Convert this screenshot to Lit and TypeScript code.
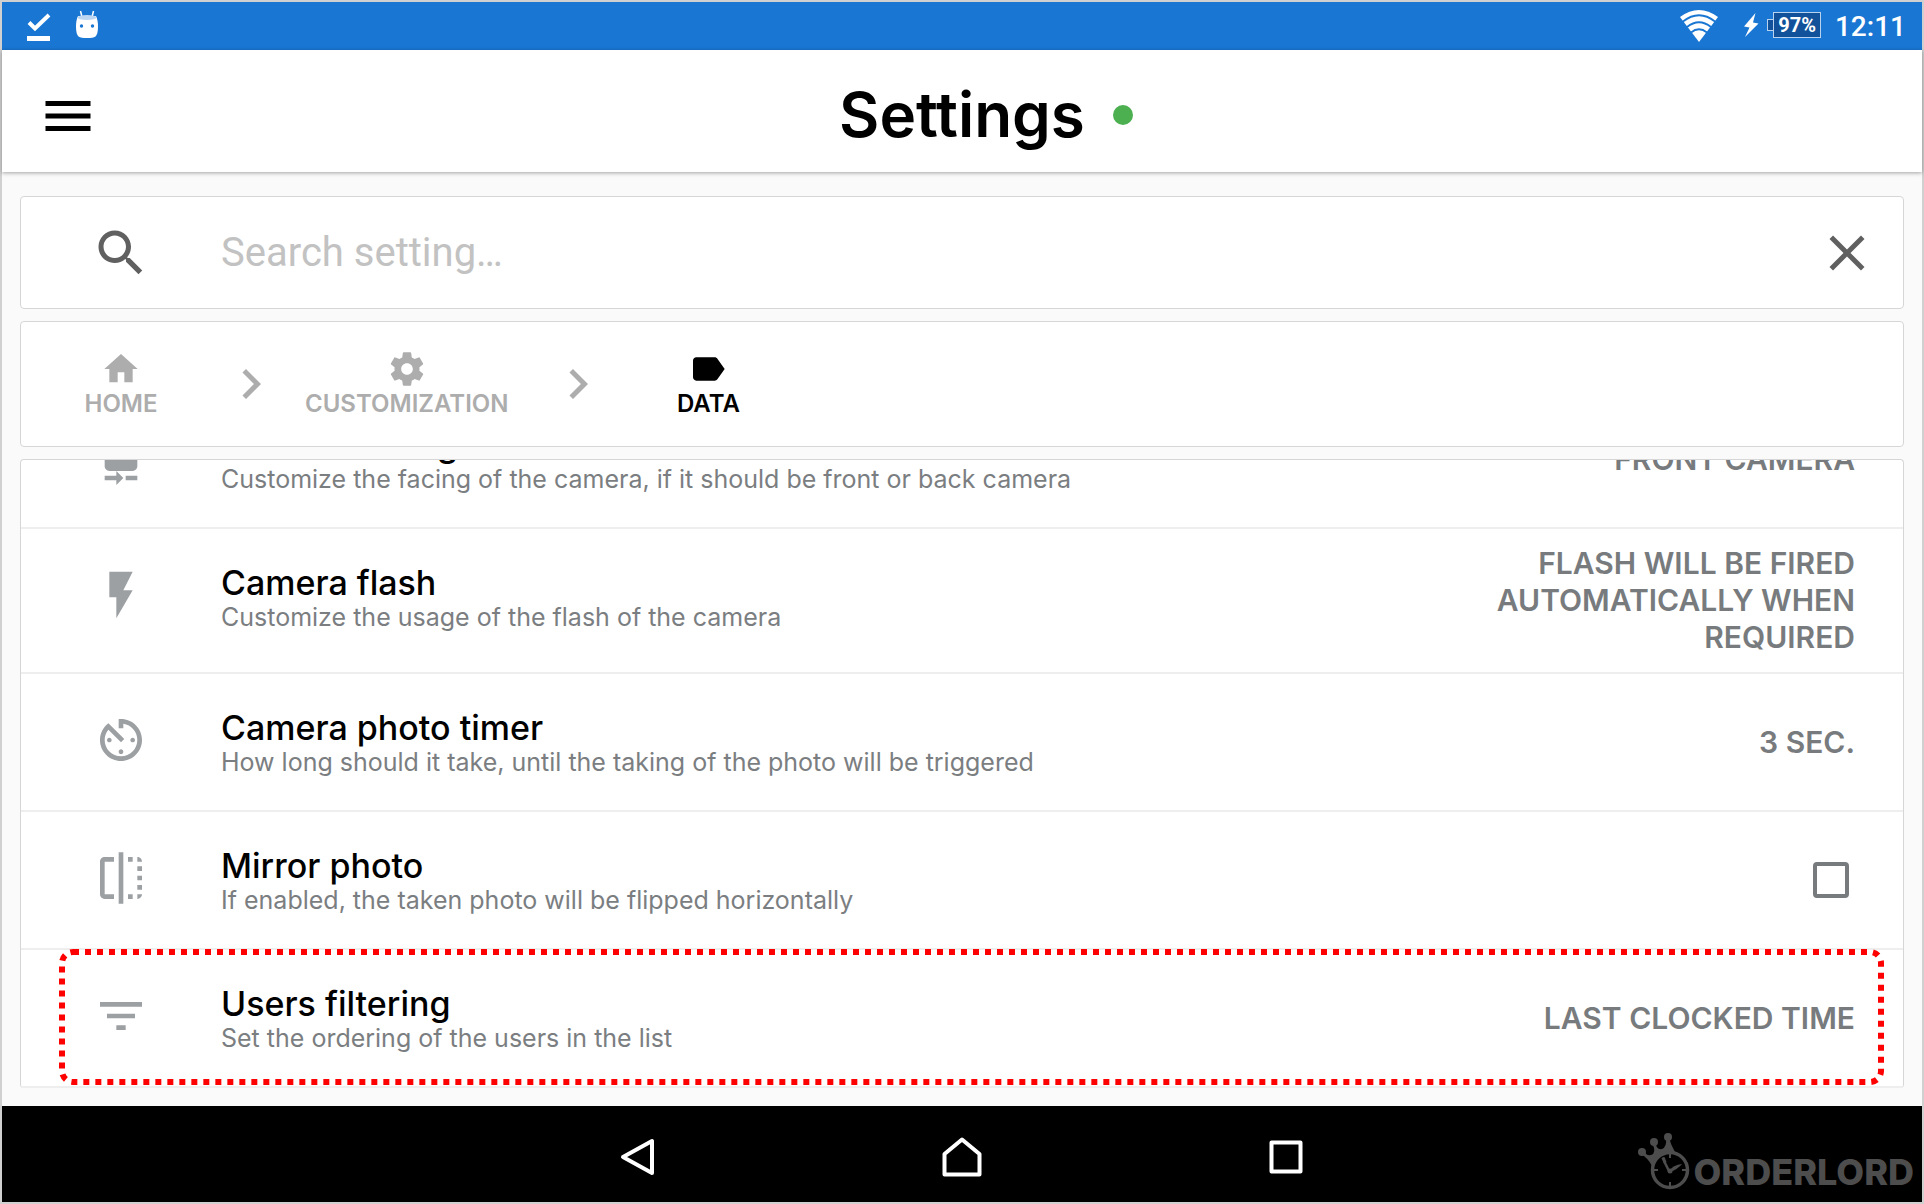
import { LitElement, html, css, svg, nothing } from "lit";
import { customElement, property, state } from "lit/decorators.js";
import { classMap } from "lit/directives/class-map.js";

const ICONS: Record<string, string> = {
  menu: "M3 18h18v-2H3v2zm0-5h18v-2H3v2zm0-7v2h18V6H3z",
  search:
    "M15.5 14h-.79l-.28-.27C15.41 12.59 16 11.11 16 9.5 16 5.91 13.09 3 9.5 3S3 5.91 3 9.5 5.91 16 9.5 16c1.61 0 3.09-.59 4.23-1.57l.27.28v.79l5 4.99L20.49 19l-4.99-5zm-6 0C7.01 14 5 11.99 5 9.5S7.01 5 9.5 5 14 7.01 14 9.5 11.99 14 9.5 14z",
  close:
    "M19 6.41L17.59 5 12 10.59 6.41 5 5 6.41 10.59 12 5 17.59 6.41 19 12 13.41 17.59 19 19 17.59 13.41 12z",
  home: "M10 20v-6h4v6h5v-8h3L12 3 2 12h3v8z",
  chevron: "M10 6L8.59 7.41 13.17 12l-4.58 4.59L10 18l6-6z",
  settings:
    "M19.43 12.98c.04-.32.07-.64.07-.98s-.03-.66-.07-.98l2.11-1.65c.19-.15.24-.42.12-.64l-2-3.46c-.12-.22-.39-.3-.61-.22l-2.49 1c-.52-.4-1.08-.73-1.69-.98l-.38-2.65C14.46 2.18 14.25 2 14 2h-4c-.25 0-.46.18-.49.42l-.38 2.65c-.61.25-1.17.59-1.69.98l-2.49-1c-.23-.09-.49 0-.61.22l-2 3.46c-.13.22-.07.49.12.64l2.11 1.65c-.04.32-.07.65-.07.98s.03.66.07.98l-2.11 1.65c-.19.15-.24.42-.12.64l2 3.46c.12.22.39.3.61.22l2.49-1c.52.4 1.08.73 1.69.98l.38 2.65c.03.24.24.42.49.42h4c.25 0 .46-.18.49-.42l.38-2.65c.61-.25 1.17-.59 1.69-.98l2.49 1c.23.09.49 0 .61-.22l2-3.46c.12-.22.07-.49-.12-.64l-2.11-1.65zM12 15.5c-1.93 0-3.5-1.57-3.5-3.5s1.57-3.5 3.5-3.5 3.5 1.57 3.5 3.5-1.57 3.5-3.5 3.5z",
  label:
    "M17.63 5.84C17.27 5.33 16.67 5 16 5L5 5.01C3.9 5.01 3 5.9 3 7v10c0 1.1.9 1.99 2 1.99L16 19c.67 0 1.27-.33 1.63-.84L22 12l-4.37-6.16z",
  cameraRear:
    "M10 20H5v2h5v2l3-3-3-3v2zm4 0v2h5v-2h-5zm3-20H7C5.9 0 5 .9 5 2v14c0 1.1.9 2 2 2h10c1.1 0 2-.9 2-2V2c0-1.1-.9-2-2-2zm-5 6c-1.11 0-2-.89-2-2s.88-2 1.99-2 2 .89 2 2S13.1 6 12 6z",
  flash: "M7 2v11h3v9l7-12h-4l4-8z",
  timer:
    "M11 17c0 .55.45 1 1 1s1-.45 1-1-.45-1-1-1-1 .45-1 1zm0-14v4h2V5.08c3.39.49 6 3.39 6 6.92 0 3.87-3.13 7-7 7s-7-3.13-7-7c0-1.68.59-3.22 1.58-4.42L12 13l1.41-1.41-6.8-6.8v.02C4.42 6.45 3 9.05 3 12c0 4.97 4.02 9 9 9 4.97 0 9-4.03 9-9s-4.03-9-9-9h-1zm7 9c0-.55-.45-1-1-1s-1 .45-1 1 .45 1 1 1 1-.45 1-1zM6 12c0 .55.45 1 1 1s1-.45 1-1-.45-1-1-1-1 .45-1 1z",
  flip: "M15 21h2v-2h-2v2zm4-12h2V7h-2v2zM3 5v14c0 1.1.9 2 2 2h4v-2H5V5h4V3H5c-1.1 0-2 .9-2 2zm16-2v2h2c0-1.1-.9-2-2-2zm-8 20h2V1h-2v22zm8-6h2v-2h-2v2zM15 5h2V3h-2v2zm4 8h2v-2h-2v2zm0 8c1.1 0 2-.9 2-2h-2v2z",
  filter: "M10 18h4v-2h-4v2zM3 6v2h18V6H3zm3 7h12v-2H6v2z",
};

const icon = (name: string, cls: string) =>
  html`<svg class=${cls} viewBox="0 0 24 24" fill="currentColor" aria-hidden="true">
    ${svg`<path d=${ICONS[name]}></path>`}
  </svg>`;

/** System bar: notifications on the left, connectivity and clock on the right. */
@customElement("status-bar")
class StatusBar extends LitElement {
  static styles = css`
    :host {
      display: flex;
      align-items: center;
      justify-content: space-between;
      height: 48px;
      box-sizing: border-box;
      padding: 0 16px 2px 25px;
      background: #1976d2;
      color: #fff;
      font-family: Roboto, sans-serif;
    }
    .group {
      display: flex;
      align-items: center;
    }
    .notices {
      gap: 24px;
    }
    .wifi {
      margin-right: 24px;
    }
    .bolt {
      margin-right: 8px;
    }
    .battery {
      display: flex;
      align-items: center;
      margin-right: 14px;
    }
    .cap {
      width: 6px;
      height: 12px;
      box-sizing: border-box;
      border: 1px solid #b9d3ee;
      border-right: none;
      background: #11529a;
    }
    .level {
      box-sizing: border-box;
      height: 26px;
      padding: 0 4px;
      border: 1px solid #b9d3ee;
      background: #11529a;
      font-size: 20px;
      line-height: 24px;
      font-weight: 700;
    }
    .clock {
      padding-top: 4px;
      font-size: 28px;
      line-height: 40px;
      font-weight: 500;
    }
  `;

  render() {
    return html`
      <div class="group notices">
        <svg width="24" height="32" viewBox="0 0 24 32" aria-hidden="true">
          <path d="M2 13.500l6 6L22 6" fill="none" stroke="#fff" stroke-width="4"></path>
          <path d="M0 27h23v5H0z" fill="#fff"></path>
        </svg>
        <svg width="24" height="32" viewBox="0 0 24 32" aria-hidden="true">
          <path d="M5.500 2L7 8M18.500 2L17 8" stroke="#fff" stroke-width="1.500"></path>
          <path d="M3 7h18q2 4 2 11t-2.500 9.500Q18 29 12 29t-8.500-1.500Q1 25 1 18T3 7z" fill="#fff"></path>
          <ellipse cx="12" cy="8.500" rx="9.500" ry="2.600" fill="#bdd7f2"></ellipse>
          <circle cx="6.500" cy="17" r="1.700" fill="#1976d2"></circle>
          <circle cx="17.500" cy="17" r="1.700" fill="#1976d2"></circle>
        </svg>
      </div>
      <div class="group">
        <svg class="wifi" width="40" height="34" viewBox="0 0 40 34" aria-label="Wi-Fi">
          <path d="M1 9Q20-5 39 9L20 34z" fill="#fff"></path>
          <path
            d="M4 13.500Q20 1 36 13.500M8 19Q20 9.500 32 19M12 24.500Q20 18 28 24.500"
            fill="none"
            stroke="#1976d2"
            stroke-width="1.800"
          ></path>
        </svg>
        <svg class="bolt" width="16" height="26" viewBox="0 0 16 26" aria-label="Charging">
          <path d="M12.500 1L1 14.500l5.500 1L2 25 15.500 11.500l-5.500-1z" fill="#fff"></path>
        </svg>
        <div class="battery"><span class="cap"></span><span class="level">97%</span></div>
        <span class="clock">12:11</span>
      </div>
    `;
  }
}

/** Android navigation keys with the product mark at the far right. */
@customElement("system-nav")
class SystemNav extends LitElement {
  static styles = css`
    :host {
      display: grid;
      grid-template-columns: 1fr auto 1fr;
      align-items: center;
      height: 96px;
      background: #000;
    }
    .keys {
      grid-column: 2;
      display: flex;
    }
    .key {
      box-sizing: border-box;
      width: 324px;
      height: 96px;
      padding: 6px 0 0;
      border: none;
      background: none;
      display: flex;
      align-items: center;
      justify-content: center;
    }
    .brand {
      justify-self: end;
      align-self: end;
      display: flex;
      align-items: flex-end;
      gap: 4px;
      padding: 0 8px 12px 0;
      color: #4d4d4d;
      font-family: Inter, sans-serif;
      font-size: 36px;
      line-height: 36px;
      font-weight: 800;
    }
  `;

  render() {
    return html`
      <div class="keys">
        <button class="key" aria-label="Back">
          <svg width="40" height="40" viewBox="0 0 40 40" fill="none" stroke="#fff" stroke-width="4" stroke-linejoin="round">
            <path d="M34 4v32L5 20z"></path>
          </svg>
        </button>
        <button class="key" aria-label="Home">
          <svg width="40" height="40" viewBox="0 0 40 40" fill="none" stroke="#fff" stroke-width="4" stroke-linejoin="round">
            <path d="M20 2.500L37.500 17v20.500h-35V17z"></path>
          </svg>
        </button>
        <button class="key" aria-label="Recent apps">
          <svg width="40" height="40" viewBox="0 0 40 40" fill="none" stroke="#fff" stroke-width="4" stroke-linejoin="round">
            <path d="M5.500 5.500h29v29h-29z"></path>
          </svg>
        </button>
      </div>
      <div class="brand">
        <svg width="52" height="57" viewBox="0 0 52 57" aria-hidden="true">
          <path
            d="M3 21Q10 25 14 33Q22 20 37 19Q33 12 31 5L28 5Q29 14 24 16 18 17 18 10L14 10Q19 20 13 22 8 23 6 18z"
            fill="#4d4d4d"
          ></path>
          <circle cx="4" cy="19" r="4" fill="#4d4d4d"></circle>
          <circle cx="16" cy="9" r="4" fill="#4d4d4d"></circle>
          <circle cx="30" cy="4" r="4" fill="#4d4d4d"></circle>
          <circle cx="32" cy="37" r="17.500" fill="#000" stroke="#4d4d4d" stroke-width="3.500"></circle>
          <path d="M32 20v5M32 49v5M15 37h5M44 37h5" stroke="#4d4d4d" stroke-width="2"></path>
          <path d="M31 38L26 28" stroke="#4d4d4d" stroke-width="2.500"></path>
          <path d="M23.500 25.500q1-2 3-1.500l2 5-2.500 1.500z" fill="#4d4d4d"></path>
          <path d="M31 38q4-6 13-7-4 5-12 8z" fill="#4d4d4d"></path>
          <circle cx="32" cy="38" r="2.500" fill="#4d4d4d"></circle>
        </svg>
        <span>ORDERLORD</span>
      </div>
    `;
  }
}

interface Setting {
  id: string;
  icon: string;
  title: string;
  detail: string;
  value?: string;
  selected?: boolean;
}

/** One line of the settings list: icon, title with detail, and its value or tick box. */
@customElement("setting-row")
class SettingRow extends LitElement {
  @property({ attribute: false }) setting!: Setting;

  static styles = css`
    :host {
      display: block;
      flex: none;
    }
    .row {
      position: relative;
      display: flex;
      box-sizing: border-box;
      min-height: 138px;
      border-bottom: 2px solid #eee;
    }
    .pic {
      display: flex;
      justify-content: center;
      flex: none;
      width: 200px;
      padding-top: 38px;
      color: #9ca0a3;
    }
    .icon {
      width: 56px;
      height: 56px;
    }
    .text {
      flex: 1;
      padding-top: 34px;
    }
    .title {
      display: block;
      font-size: 34px;
      line-height: 40px;
      font-weight: 500;
      color: #000;
    }
    .detail {
      margin: 0;
      font-size: 25px;
      line-height: 28px;
      color: #7b7e81;
    }
    .value {
      flex: none;
      align-self: center;
      width: 440px;
      padding: 16px 48px 16px 24px;
      border: none;
      background: none;
      text-align: right;
      font: 600 30px/37px Inter, sans-serif;
      text-transform: uppercase;
      color: #787b7e;
    }
    .tick {
      appearance: none;
      flex: none;
      align-self: center;
      box-sizing: border-box;
      width: 36px;
      height: 36px;
      margin: 0 54px 0 0;
      border: 4px solid #787b7e;
      border-radius: 4px;
      background: #fff;
    }
    .tick:checked {
      background: #787b7e;
    }
    .mark {
      position: absolute;
      inset: -1px 19px 1px 38px;
      pointer-events: none;
    }
    .mark svg {
      display: block;
      width: 100%;
      height: 100%;
    }
    .outline {
      x: 3px;
      y: 3px;
      width: calc(100% - 6px);
      height: calc(100% - 6px);
      rx: 11px;
      fill: none;
      stroke: #f00;
      stroke-width: 6px;
      stroke-dasharray: 6px 6px;
    }
  `;

  render() {
    const s = this.setting;
    return html`
      <div class="row">
        <div class="pic">${icon(s.icon, "icon")}</div>
        <div class="text">
          <label class="title" for=${s.id}>${s.title}</label>
          <p class="detail">${s.detail}</p>
        </div>
        ${s.value
          ? html`<button class="value" id=${s.id}>${s.value}</button>`
          : html`<input class="tick" id=${s.id} type="checkbox" />`}
        ${s.selected
          ? html`<div class="mark"><svg aria-hidden="true"><rect class="outline"></rect></svg></div>`
          : nothing}
      </div>
    `;
  }
}

@customElement("app-root")
class AppRoot extends LitElement {
  @state() private query = "";

  private crumbs = [
    { icon: "home", text: "Home" },
    { icon: "settings", text: "Customization" },
    { icon: "label", text: "Data" },
  ];

  private settings: Setting[] = [
    {
      id: "facing",
      icon: "cameraRear",
      title: "Camera facing",
      detail: "Customize the facing of the camera, if it should be front or back camera",
      value: "Front camera",
    },
    {
      id: "flash",
      icon: "flash",
      title: "Camera flash",
      detail: "Customize the usage of the flash of the camera",
      value: "Flash will be fired automatically when required",
    },
    {
      id: "timer",
      icon: "timer",
      title: "Camera photo timer",
      detail: "How long should it take, until the taking of the photo will be triggered",
      value: "3 sec.",
    },
    {
      id: "mirror",
      icon: "flip",
      title: "Mirror photo",
      detail: "If enabled, the taken photo will be flipped horizontally",
    },
    {
      id: "ordering",
      icon: "filter",
      title: "Users filtering",
      detail: "Set the ordering of the users in the list",
      value: "Last clocked time",
      selected: true,
    },
  ];

  static styles = css`
    :host {
      display: flex;
      flex-direction: column;
      box-sizing: border-box;
      height: 100vh;
      border: 2px solid #d0d0d0;
      background: #fafafa;
      font-family: Inter, sans-serif;
    }
    status-bar,
    system-nav {
      flex: none;
    }
    .header {
      position: relative;
      flex: none;
      display: grid;
      grid-template-columns: 1fr auto 1fr;
      align-items: center;
      height: 122px;
      box-sizing: border-box;
      padding: 8px 36px 0;
      background: #fff;
      box-shadow: 0 1px 4px rgba(0, 0, 0, 0.35);
    }
    .plain {
      display: flex;
      padding: 0;
      border: none;
      background: none;
      color: #606060;
    }
    .menu {
      justify-self: start;
      padding-top: 2px;
      color: #000;
    }
    .big {
      width: 60px;
      height: 60px;
    }
    .heading {
      margin: 0;
      font-size: 62px;
      line-height: 70px;
      font-weight: 600;
      color: #000;
    }
    .online {
      width: 20px;
      height: 20px;
      margin-left: 28px;
      border-radius: 50%;
      background: #4caf50;
    }
    .content {
      flex: 1;
      min-height: 0;
      display: flex;
      flex-direction: column;
      gap: 12px;
      padding: 24px 18px 18px;
    }
    .card {
      flex: none;
      box-sizing: border-box;
      border: 1px solid #d6d6d6;
      border-radius: 4px;
      background: #fff;
    }
    .search {
      display: flex;
      align-items: center;
      height: 113px;
      padding-right: 26px;
    }
    .lens {
      display: flex;
      justify-content: center;
      flex: none;
      width: 200px;
      color: #606060;
    }
    .field {
      flex: 1;
      min-width: 0;
      height: 72px;
      padding: 0;
      border: none;
      outline: none;
      background: none;
      font: 400 40px/48px Roboto, sans-serif;
      color: #000;
    }
    .field::placeholder {
      color: #c2c2c2;
      opacity: 1;
    }
    .crumbs {
      display: flex;
      align-items: center;
      height: 126px;
    }
    .trail {
      display: flex;
      align-items: center;
      margin: 0;
      padding: 0;
      list-style: none;
      color: #adadad;
    }
    .crumb {
      display: flex;
      align-items: center;
    }
    .step {
      display: flex;
      flex-direction: column;
      align-items: center;
      box-sizing: border-box;
      min-width: 200px;
      color: inherit;
      text-decoration: none;
      text-transform: uppercase;
      font-size: 24px;
      line-height: 30px;
      font-weight: 600;
    }
    .middle {
      padding: 0 40px 0 24px;
    }
    .small {
      width: 40px;
      height: 40px;
    }
    .current {
      color: #000;
    }
    .list {
      flex: 1;
      min-height: 0;
      display: flex;
      flex-direction: column;
      justify-content: flex-end;
      overflow: hidden;
      border-bottom: none;
    }
  `;

  render() {
    return html`
      <status-bar></status-bar>
      <header class="header">
        <button class="plain menu" aria-label="Menu">${icon("menu", "big")}</button>
        <h1 class="heading">Settings</h1>
        <span class="online"></span>
      </header>
      <main class="content">
        <div class="card search">
          <label class="lens" for="query" aria-label="Search">${icon("search", "big")}</label>
          <input
            class="field"
            id="query"
            type="text"
            placeholder="Search setting…"
            .value=${this.query}
            @input=${(e: Event) => (this.query = (e.target as HTMLInputElement).value)}
          />
          <button class="plain" aria-label="Clear" @click=${() => (this.query = "")}>${icon("close", "big")}</button>
        </div>
        <nav class="card crumbs">
          <ol class="trail">
            ${this.crumbs.map((c, i) => {
              const last = i === this.crumbs.length - 1;
              return html`<li class="crumb">
                <a class=${classMap({ step: true, middle: i > 0 && !last, current: last })} href="#" aria-current=${last ? "page" : nothing}
                  >${icon(c.icon, "small")}<span>${c.text}</span></a
                >${last ? nothing : icon("chevron", "big")}
              </li>`;
            })}
          </ol>
        </nav>
        <section class="card list">
          ${this.settings.map((s) => html`<setting-row .setting=${s}></setting-row>`)}
        </section>
      </main>
      <system-nav></system-nav>
    `;
  }
}
